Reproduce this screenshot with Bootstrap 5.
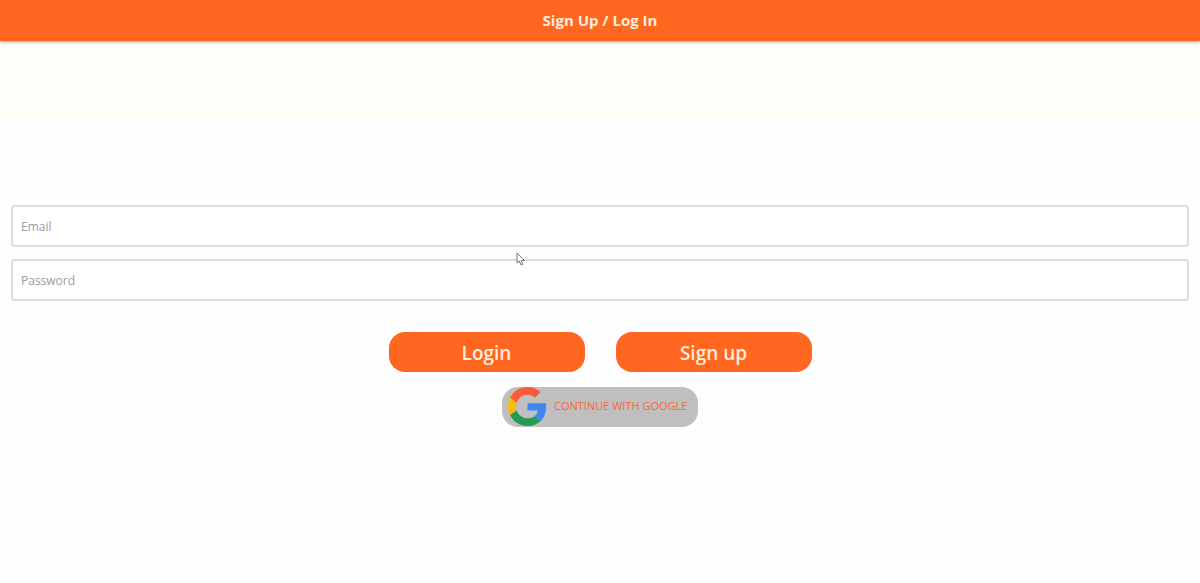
<!DOCTYPE html>
<html lang="en">
<head>
<meta charset="utf-8">
<meta name="viewport" content="width=device-width, initial-scale=1">
<title>Sign Up / Log In</title>
<link href="https://cdn.jsdelivr.net/npm/bootstrap@5.3.0/dist/css/bootstrap.min.css" rel="stylesheet">
<style>
  :root { --brand: #ff661f; --cream: #ffeedd; }
  body { font-family: "Open Sans", "Noto Sans", sans-serif; background: linear-gradient(#fffffa 120px, #fefefe 120px); }
  .app-header { height: 41px; padding-bottom: 2px; background: var(--brand); color: var(--cream); box-shadow: 0 1px 3px rgba(0, 0, 0, .4); }
  .app-header h1 { font-size: 15px; line-height: 20px; font-weight: 700; }
  .auth-form { padding: 7px 11px 0; }
  .fields { gap: 12px; }
  .fields .form-control { height: 42px; padding: 2px 8px 0; font-size: 12px; border: 2px solid #dcdcdc; border-radius: 4px; background: #fff; }
  .fields .form-control::placeholder { color: #9d9d9d; }
  .actions { gap: 31px; margin-top: 31px; }
  .btn-auth { width: 196px; height: 40px; border: 0; border-radius: 16px; padding: 2px 0 0; }
  .btn-brand, .btn-brand:hover { background: var(--brand); color: var(--cream); font-size: 19px; font-weight: 600; line-height: 24px; }
  .btn-google, .btn-google:hover { background: #bfbfbf; color: #f8693a; font-size: 11px; margin-top: 15px; padding: 0 0 0 6px; gap: 7px; }
  .pointer { left: 43%; top: 47px; margin-left: -2px; }
</style>
</head>
<body class="d-flex flex-column min-vh-100">
<header class="app-header d-flex align-items-center justify-content-center">
  <h1 class="m-0">Sign Up / Log In</h1>
</header>
<main class="flex-grow-1 d-flex flex-column justify-content-center">
  <form class="auth-form">
    <div class="fields d-flex flex-column position-relative">
      <input class="form-control" type="email" id="email" placeholder="Email" aria-label="Email">
      <input class="form-control" type="password" id="password" placeholder="Password" aria-label="Password">
      <svg class="pointer position-absolute" width="10" height="14" viewBox="0 0 10 14" aria-hidden="true">
        <path d="M1 1v10l2.3-2 1.8 4 1.8-.8-1.7-3.7H8.500z" fill="#fff" stroke="#777" stroke-width="1"/>
      </svg>
    </div>
    <div class="actions d-flex flex-wrap justify-content-center">
      <button class="btn btn-auth btn-brand" type="button">Login</button>
      <button class="btn btn-auth btn-brand" type="button">Sign up</button>
    </div>
    <div class="d-flex justify-content-center">
      <button class="btn btn-auth btn-google d-flex align-items-center" type="button">
        <svg width="39" height="39" viewBox="0 0 48 48" aria-hidden="true">
          <path fill="#f75b3b" d="M24 9.500c3.540 0 6.710 1.220 9.210 3.600l6.850-6.850C35.900 2.380 30.470 0 24 0 14.620 0 6.510 5.380 2.560 13.220l7.980 6.190C12.430 13.720 17.740 9.500 24 9.500z"/>
          <path fill="#4285f4" d="M46.980 24.550c0-1.570-.15-3.090-.38-4.550H24v9.020h12.940c-.58 2.960-2.260 5.480-4.780 7.180l7.730 6c4.510-4.180 7.090-10.360 7.090-17.650z"/>
          <path fill="#fbbc05" d="M10.530 28.590A14.500 14.500 0 0 1 9.770 24c0-1.600.27-3.140.76-4.590l-7.980-6.190A23.900 23.900 0 0 0 0 24c0 3.880.92 7.540 2.560 10.780z"/>
          <path fill="#289a50" d="M24 48c6.480 0 11.930-2.130 15.890-5.810l-7.730-6c-2.150 1.450-4.920 2.300-8.160 2.300-6.260 0-11.570-4.220-13.470-9.910l-7.980 6.190C6.510 42.620 14.620 48 24 48z"/>
        </svg>
        <span class="text-nowrap">CONTINUE WITH GOOGLE</span>
      </button>
    </div>
  </form>
</main>
<script src="https://cdn.jsdelivr.net/npm/bootstrap@5.3.0/dist/js/bootstrap.bundle.min.js"></script>
</body>
</html>
